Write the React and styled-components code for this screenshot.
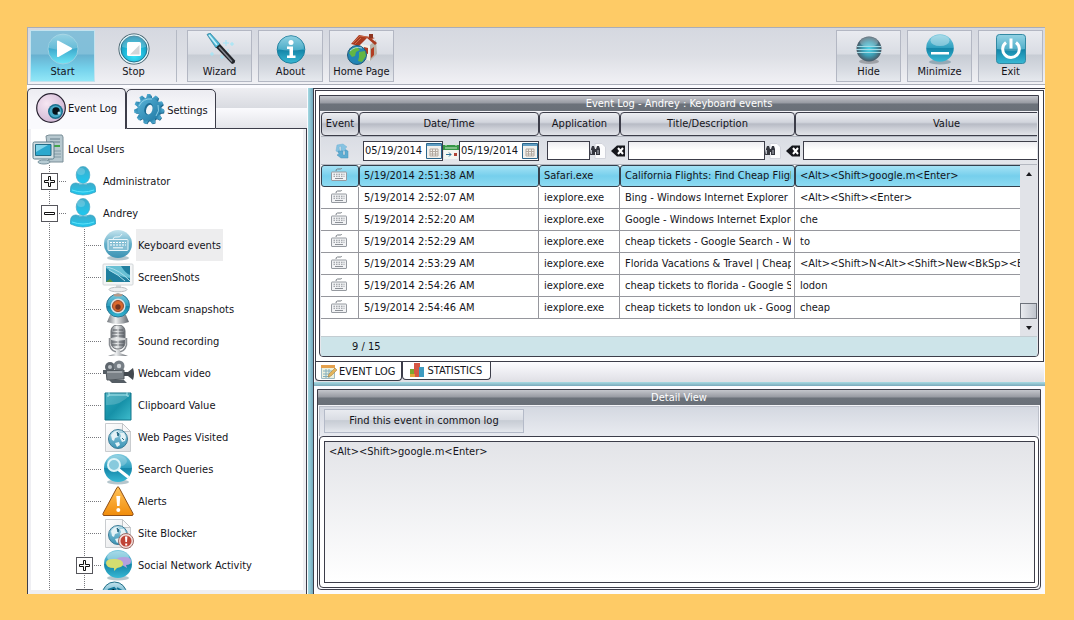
import { useState } from "react";
import styled, { createGlobalStyle, css } from "styled-components";

const ink = "#3c3d49";

const users = [
  { level: 0, icon: "computer", label: "Local Users" },
  { level: 1, icon: "user", label: "Administrator", toggle: "plus" },
  { level: 1, icon: "user", label: "Andrey", toggle: "minus" },
  { level: 2, icon: "keyboard", label: "Keyboard events" },
  { level: 2, icon: "screen", label: "ScreenShots" },
  { level: 2, icon: "webcam", label: "Webcam snapshots" },
  { level: 2, icon: "mic", label: "Sound recording" },
  { level: 2, icon: "camera", label: "Webcam video" },
  { level: 2, icon: "clipboard", label: "Clipboard Value" },
  { level: 2, icon: "webpage", label: "Web Pages Visited" },
  { level: 2, icon: "search", label: "Search Queries" },
  { level: 2, icon: "alert", label: "Alerts" },
  { level: 2, icon: "blocker", label: "Site Blocker" },
  { level: 2, icon: "chat", label: "Social Network Activity", toggle: "plus" },
  { level: 2, icon: "globe", label: "", toggle: "plus" },
];

const events = [
  ["5/19/2014 2:51:38 AM", "Safari.exe", "California Flights: Find Cheap Flight", "<Alt><Shift>google.m<Enter>"],
  ["5/19/2014 2:52:07 AM", "iexplore.exe", "Bing - Windows Internet Explorer", "<Alt><Shift><Enter>"],
  ["5/19/2014 2:52:20 AM", "iexplore.exe", "Google - Windows Internet Explore", "che"],
  ["5/19/2014 2:52:29 AM", "iexplore.exe", "cheap tickets - Google Search - Win", "to"],
  ["5/19/2014 2:53:29 AM", "iexplore.exe", "Florida Vacations & Travel | Cheap", "<Alt><Shift>N<Alt><Shift>New<BkSp><Bk"],
  ["5/19/2014 2:54:26 AM", "iexplore.exe", "cheap tickets to florida - Google Se", "lodon"],
  ["5/19/2014 2:54:46 AM", "iexplore.exe", "cheap tickets to london uk - Google", "cheap"],
];

export default function App() {
  const [selected, setSelected] = useState(0);

  return (
    <>
      <GlobalStyle />
      <Gradients />
      <Window>
        <Toolbar>
          <ToolButton $active><Icon name="play" /><span>Start</span></ToolButton>
          <ToolButton $flat><Icon name="stop" /><span>Stop</span></ToolButton>
          <Separator />
          <ToolButton><Icon name="wand" /><span>Wizard</span></ToolButton>
          <ToolButton><Icon name="info" /><span>About</span></ToolButton>
          <ToolButton><Icon name="home" /><span>Home Page</span></ToolButton>
          <Spacer />
          <ToolButton><Icon name="hide" /><span>Hide</span></ToolButton>
          <ToolButton><Icon name="minimize" /><span>Minimize</span></ToolButton>
          <ToolButton><Icon name="power" /><span>Exit</span></ToolButton>
        </Toolbar>
        <Main>
          <Sidebar>
            <SideTabs>
              <SideTab $current><Icon name="eye" /><span>Event Log</span></SideTab>
              <SideTab><Icon name="gear" /><span>Settings</span></SideTab>
              <TabFiller />
            </SideTabs>
            <TreeFrame>
              <Tree>
                {users.map((node, i) => (
                  <TreeNode key={i} node={node} />
                ))}
              </Tree>
            </TreeFrame>
          </Sidebar>
          <Splitter />
          <Content>
            <LogOuter>
              <LogFrame>
                <LogPanel>
                  <TitleBar>Event Log - Andrey : Keyboard events</TitleBar>
                  <HeaderTable aria-label="Event columns">
                    <Columns />
                    <thead>
                      <tr>
                        <th>Event</th>
                        <th>Date/Time</th>
                        <th>Application</th>
                        <th>Title/Description</th>
                        <th>Value</th>
                      </tr>
                    </thead>
                  </HeaderTable>
                  <Filters />
                  <LogBody>
                    <TableArea>
                      <EventTable aria-label="Events">
                        <Columns />
                        <tbody>
                          {events.map((event, i) => (
                            <EventRow key={event[0]} $selected={i === selected} onClick={() => setSelected(i)}>
                              <td><Icon name="keys" size={16} /></td>
                              {event.map((text, n) => (
                                <td key={n}><CellText>{text}</CellText></td>
                              ))}
                            </EventRow>
                          ))}
                        </tbody>
                      </EventTable>
                    </TableArea>
                    <ScrollTrack>
                      <ScrollButton aria-label="Scroll up"><Arrow $up /></ScrollButton>
                      <Spacer />
                      <ScrollThumb />
                      <ScrollButton aria-label="Scroll down"><Arrow /></ScrollButton>
                    </ScrollTrack>
                  </LogBody>
                  <LogFooter>9 / 15</LogFooter>
                </LogPanel>
              </LogFrame>
              <LogTabs>
                <LogTab $current><Icon name="log" size={16} />EVENT LOG</LogTab>
                <LogTab><Icon name="stats" size={16} />STATISTICS</LogTab>
              </LogTabs>
            </LogOuter>
            <Divider />
            <DetailPanel>
              <TitleBar>Detail View</TitleBar>
              <DetailTools>
                <FindButton>Find this event in common log</FindButton>
              </DetailTools>
              <DetailFrame>
                <DetailText readOnly aria-label="Detail View" value={events[selected][3]} />
              </DetailFrame>
            </DetailPanel>
          </Content>
        </Main>
      </Window>
    </>
  );
}

function TreeNode({ node }) {
  const { level, icon, label, toggle } = node;
  const button = toggle && (
    <Toggle aria-label={toggle === "plus" ? "Expand" : "Collapse"}>
      <svg width="15" height="15" viewBox="0 0 15 15" fill="#fff" stroke="#111">
        {toggle === "plus" ? (
          <path d="M6.5 2.5h2v4h4v2h-4v4h-2v-4h-4v-2h4z" />
        ) : (
          <path d="M2.5 6.5h10v2h-10z" />
        )}
      </svg>
    </Toggle>
  );

  return (
    <TreeRow>
      {level === 2 && <Guide />}
      {level > 0 && <Guide $branch>{button}</Guide>}
      <Icon name={icon} />
      {label && <NodeLabel $selected={icon === "keyboard"}>{label}</NodeLabel>}
    </TreeRow>
  );
}

function Columns() {
  return (
    <colgroup>
      <col width="38" />
      <col width="180" />
      <col width="81" />
      <col width="175" />
      <col />
    </colgroup>
  );
}

function Filters() {
  return (
    <FilterRow>
      <RefreshCell>
        <IconButton aria-label="Refresh"><Icon name="refresh" size={16} /></IconButton>
      </RefreshCell>
      <DateBox>
        <input aria-label="From date" defaultValue="05/19/2014" />
        <IconButton aria-label="Pick start date"><Icon name="calendar" size={16} /></IconButton>
      </DateBox>
      <IconButton aria-label="Date range"><Icon name="range" size={16} /></IconButton>
      <DateBox>
        <input aria-label="To date" defaultValue="05/19/2014" />
        <IconButton aria-label="Pick end date"><Icon name="calendar" size={16} /></IconButton>
      </DateBox>
      <FilterInput aria-label="Application" $width="43px" />
      <IconButton aria-label="Find application"><Icon name="find" size={16} /></IconButton>
      <ClearButton aria-label="Clear application"><Icon name="clear" size={16} /></ClearButton>
      <FilterInput aria-label="Title" $width="137px" $tight />
      <IconButton aria-label="Find title"><Icon name="find" size={16} /></IconButton>
      <ClearButton aria-label="Clear title"><Icon name="clear" size={16} /></ClearButton>
      <FilterInput aria-label="Value" $tight $last />
    </FilterRow>
  );
}

// Paint shared by all the icons below
function Gradients() {
  return (
    <Defs aria-hidden="true">
      <defs>
        <linearGradient id="sphere" x2="0" y2="1">
          <stop offset="0" stopColor="#7cc9de" />
          <stop offset=".5" stopColor="#2d9fbf" />
          <stop offset=".52" stopColor="#1485a8" />
          <stop offset="1" stopColor="#38b8d4" />
        </linearGradient>
        <linearGradient id="softSphere" x2="0" y2="1">
          <stop offset="0" stopColor="#c4e4ee" />
          <stop offset=".5" stopColor="#67b0ca" />
          <stop offset="1" stopColor="#3c93b4" />
        </linearGradient>
        <radialGradient id="bright" cx=".5" cy=".75" r=".7">
          <stop offset="0" stopColor="#3fe4fa" />
          <stop offset=".6" stopColor="#1cb4d6" />
          <stop offset="1" stopColor="#1588ad" />
        </radialGradient>
        <linearGradient id="playFill" x2="0" y2="1">
          <stop offset="0" stopColor="#7cc6dd" />
          <stop offset=".5" stopColor="#3fabce" />
          <stop offset="1" stopColor="#6ce6f7" />
        </linearGradient>
        <radialGradient id="hideFill">
          <stop offset="0" stopColor="#4fd6ea" />
          <stop offset=".55" stopColor="#3d9cb2" />
          <stop offset="1" stopColor="#4a5966" />
        </radialGradient>
        <linearGradient id="person" x2="0" y2="1">
          <stop offset="0" stopColor="#3fabc9" />
          <stop offset="1" stopColor="#1dc8f0" />
        </linearGradient>
        <linearGradient id="metal" x2="1" y2="0">
          <stop offset="0" stopColor="#70757b" />
          <stop offset=".4" stopColor="#eef0f1" />
          <stop offset="1" stopColor="#5f646b" />
        </linearGradient>
        <linearGradient id="warn" x2="0" y2="1">
          <stop offset="0" stopColor="#ffc35a" />
          <stop offset="1" stopColor="#f18c0a" />
        </linearGradient>
        <linearGradient id="board" x2="1" y2="1">
          <stop offset="0" stopColor="#2ca5b8" />
          <stop offset=".5" stopColor="#1691a8" />
          <stop offset="1" stopColor="#3fbccc" />
        </linearGradient>
        <radialGradient id="eyeball" cx=".35" cy=".35" r=".75">
          <stop offset="0" stopColor="#f6e6f2" />
          <stop offset="1" stopColor="#cdb4d2" />
        </radialGradient>
        <linearGradient id="gearFill" x2="1" y2="1">
          <stop offset="0" stopColor="#59b3d8" />
          <stop offset="1" stopColor="#2079a4" />
        </linearGradient>
        <linearGradient id="paper" x2="1" y2="1">
          <stop offset="0" stopColor="#fff" />
          <stop offset="1" stopColor="#dfe1e4" />
        </linearGradient>
      </defs>
    </Defs>
  );
}

const shadow = <ellipse cx="16" cy="29" rx="11" ry="2.4" fill="#2b5d70" opacity=".35" />;

const page = (
  <g>
    <path d="M3.500 2.500h17l8 8v20h-25z" fill="url(#paper)" stroke="#c9cccf" />
    <path d="M20.500 2.500v8h8z" fill="#f8f8f9" stroke="#c2c5c8" />
    <circle cx="16" cy="18" r="9.500" fill="url(#softSphere)" stroke="#3a7b96" />
    <path d="M9 14q3-4 6-4l2 2-2 2 1 2-3 1-1 3-2-1zM18 12l4 0 2 4-1 4-3 1-2-4 1-2zM13 22l4-1 1 3-3 2z" fill="#e4f2f6" />
    <path d="M15 11l2 2-1 2zM20 17l2 2" stroke="#286b86" fill="#286b86" />
  </g>
);

const teeth = Array.from({ length: 11 }, (_, i) => i * (360 / 11));

const icons = {
  play: (
    <>
      <circle cx="16" cy="16" r="15" fill="url(#playFill)" stroke="#9ad0e2" />
      <path d="M2 15a14 14 0 0 1 28 0q-14 4-28 0z" fill="#fff" opacity=".2" />
      <path d="M10 8.500q0-1.500 1.500-.8l13 7q1.500.8 0 1.700l-13 7.500q-1.500.7-1.500-1z" fill="#fff" />
    </>
  ),
  stop: (
    <>
      <circle cx="16" cy="16" r="15.500" fill="#31515e" />
      <circle cx="16" cy="16" r="14.700" fill="#e4f6fb" />
      <circle cx="16" cy="16" r="13" fill="url(#bright)" stroke="#22738e" />
      <path d="M4 14a12 12 0 0 1 24 0q-12 3-24 0z" fill="#fff" opacity=".22" />
      <rect x="9" y="9" width="14" height="14" rx="1.500" fill="#fff" />
      <path d="M12 21.500h9.500V12z" fill="#d3d6d9" />
    </>
  ),
  wand: (
    <>
      <path d="M3 1.500L6 0l10 11-4 4z" fill="#4db8d6" stroke="#2c7893" strokeWidth=".7" />
      <path d="M5 2l8 10" stroke="#c9f0fa" strokeWidth="1.600" />
      <path d="M12 14.500l4-3.500 15 16.500q.5 3-3 3.500z" fill="#22252a" />
      <path d="M15 14l13 14.500" stroke="#858a92" strokeWidth="1.500" />
      <path d="M22 7v6M19 10h6M28 9v4M26 11h4M8 19v4M6 21h4M18 22v4M16 24h4M24 16v3" stroke="#9ee6f8" strokeWidth="1" />
    </>
  ),
  info: (
    <>
      <circle cx="16" cy="16.500" r="13.800" fill="url(#sphere)" stroke="#1e7f9e" />
      <path d="M3 15.500a13 13 0 0 1 26 0q-13 5-26 0z" fill="#fff" opacity=".16" />
      <circle cx="16" cy="9.500" r="2.500" fill="#fff" />
      <path d="M12 13.500h6v9h2.500v2.500h-8.500v-2.500h2.500v-6.500h-2.500z" fill="#fff" />
    </>
  ),
  home: (
    <>
      <path d="M11 10l13 3v15l-13-5z" fill="#f3f0e8" />
      <path d="M24 12l6-5 1 14-7 7z" fill="#b9b4a8" />
      <path d="M25 16l3-2v8l-3 3zM18 14l4 1v6l-4-1z" fill="#b23d22" />
      <path d="M5 11L13 2l16 3-3 1 5 4-2 2-8-7-8 8z" fill="#a83b20" />
      <path d="M7 10L14 3l13 2M9 11l6-6" stroke="#cc6a49" fill="none" />
      <path d="M23 1h4v4h-4z" fill="#8c3420" />
      <circle cx="11" cy="22" r="9.500" fill="#2385b5" stroke="#205a79" />
      <path d="M3 20q3-6 8-6l3 3-4 2-1 4-3 1zM13 19l6-1 1 5-4 6-4-1 1-4z" fill="#63b644" />
      <path d="M4 18q5-5 12-3" stroke="#bde4ee" fill="none" opacity=".8" />
    </>
  ),
  hide: (
    <>
      <ellipse cx="16" cy="28.500" rx="10" ry="2.500" fill="#444" opacity=".35" />
      <circle cx="16" cy="16" r="12.500" fill="url(#hideFill)" />
      <ellipse cx="16" cy="9" rx="9" ry="5" fill="#fff" opacity=".24" />
      <path d="M4 13.500h24M3 16.500h26M4 19.500h24" stroke="#a5dbe5" strokeWidth="1" />
    </>
  ),
  minimize: (
    <>
      {shadow}
      <circle cx="16" cy="15" r="13.800" fill="url(#sphere)" />
      <ellipse cx="16" cy="7.500" rx="9.500" ry="5.500" fill="#fff" opacity=".35" />
      <path d="M7 19h18v2.500h-18z" fill="#fff" />
    </>
  ),
  power: (
    <>
      <rect x="1.500" y="1.500" width="29" height="29" rx="3" fill="url(#sphere)" stroke="#3289a3" />
      <path d="M2 5q0-3 3-3h22q3 0 3 3v11q-14 4-28 0z" fill="#fff" opacity=".18" />
      <path d="M11 9.500a8.300 8.300 0 1 0 10 0" fill="none" stroke="#fff" strokeWidth="3" />
      <path d="M16 5.500v10" stroke="#fff" strokeWidth="3" />
    </>
  ),
  eye: (
    <>
      <circle cx="16" cy="16" r="14.300" fill="url(#eyeball)" stroke="#282230" strokeWidth="1.200" />
      <circle cx="20.500" cy="19.500" r="7.500" fill="#1b6f8c" />
      <circle cx="20.500" cy="19.500" r="6" fill="#46a9c7" />
      <circle cx="21" cy="19" r="3.700" fill="#071219" />
      <circle cx="24" cy="21" r="1.500" fill="#b3e6f5" />
    </>
  ),
  gear: (
    <>
      <g transform="translate(1 1)" fill="#1c648a">
        {teeth.map((angle) => (
          <path key={angle} d="M13.500 5L14.500 1.500h3L18.500 5z" transform={`rotate(${angle} 16 16)`} />
        ))}
        <circle cx="16" cy="16" r="11.500" />
      </g>
      <g fill="url(#gearFill)">
        {teeth.map((angle) => (
          <path key={angle} d="M13 5.500L14.200 1h3.200L18.800 5.500z" transform={`rotate(${angle} 16 16)`} />
        ))}
        <circle cx="16" cy="16" r="11.500" />
      </g>
      <path d="M6 13q4-8 13-7M25 12q2 6-2 11" stroke="#a0dbef" fill="none" opacity=".8" />
      <ellipse cx="15.500" cy="16" rx="4" ry="6" fill="#1b6b93" transform="rotate(20 16 16)" />
      <ellipse cx="16.500" cy="16.500" rx="3" ry="5" fill="#f3f5f8" transform="rotate(20 16 16)" />
    </>
  ),
  computer: (
    <>
      <path d="M14 3l3-1h13l1 2v25h-14z" fill="#b7c8cf" stroke="#7b8f98" />
      <path d="M18 6h10M18 9h10" stroke="#657d88" />
      <path d="M22 13h6" stroke="#43a648" strokeWidth="2" />
      <path d="M22 18h7M22 21h7M22 24h7" stroke="#839aa4" />
      <rect x="1" y="9" width="21" height="17" rx="1.500" fill="#d2dee2" stroke="#5e7f8c" />
      <path d="M3.500 11.500h15.500v11h-15.500z" fill="#2ba8ce" stroke="#236c86" />
      <path d="M4 12h12l-12 7z" fill="#80d4ea" />
      <ellipse cx="12" cy="29" rx="6" ry="2" fill="#b7ccd4" stroke="#77919c" />
    </>
  ),
  user: (
    <>
      <path d="M3.500 24q0-6 5.500-6 7 3 14 0 5.500 0 5.500 6v3q-12.500 6-25 0z" fill="url(#person)" stroke="#2a9cbe" strokeWidth=".7" />
      <ellipse cx="16" cy="10" rx="6.800" ry="8.500" fill="url(#person)" stroke="#48a6c1" strokeWidth=".7" />
      <ellipse cx="14" cy="6.500" rx="4" ry="3.500" fill="#fff" opacity=".2" />
      <path d="M5 25q11 4 22 0" stroke="#5ee3fa" fill="none" />
    </>
  ),
  keyboard: (
    <>
      {shadow}
      <circle cx="16" cy="15" r="14" fill="url(#softSphere)" />
      <path d="M11 10q1-3 4-2t5-3" stroke="#e9f6fa" fill="none" />
      <rect x="6" y="10.500" width="20" height="11" rx="1" fill="#86bfd4" stroke="#e9f6fa" />
      <path d="M8 13.500h16M8 16h16" stroke="#fff" strokeDasharray="2 1" />
      <path d="M11 18.800h10" stroke="#fff" />
    </>
  ),
  screen: (
    <>
      <rect x="1" y="3" width="30" height="21" rx="1" fill="#f3f5f6" stroke="#d2d6d8" />
      <path d="M4 5h24v16h-24z" fill="#207f9f" />
      <path d="M4 5h15q5 8 9 9v3Q15 16 4 7z" fill="#69c0d4" />
      <path d="M5 6q13 3 23 14M7 9q10 5 16 11" stroke="#acdeeb" fill="none" />
      <path d="M4 21l4-3 3 3z" fill="#5d913a" />
      <path d="M14 24h5v4h-5z" fill="#d5d8db" />
      <ellipse cx="16" cy="28.500" rx="9" ry="2.300" fill="#eceeef" stroke="#bcc0c3" />
    </>
  ),
  webcam: (
    <>
      <path d="M8 22h16l3 7q-11 4-22 0z" fill="url(#metal)" />
      <circle cx="16" cy="12.500" r="11.500" fill="url(#sphere)" stroke="#2d7895" />
      <ellipse cx="16" cy="2" rx="4.500" ry="1.500" fill="#b69b8b" />
      <circle cx="16" cy="13" r="7.500" fill="#dce0e2" />
      <circle cx="16" cy="13" r="5.500" fill="#d9682f" stroke="#95492b" />
      <circle cx="16" cy="14" r="2.700" fill="#733321" />
    </>
  ),
  mic: (
    <>
      <path d="M7.500 13v7q2 7 8.500 7t8.500-7v-7" fill="none" stroke="#8b8f94" strokeWidth="1.500" />
      <rect x="9" y="0" width="14" height="24" rx="6" fill="url(#metal)" stroke="#6c7075" />
      <path d="M11 5h10M10 8h12M10 11h12M10 17h12M10 20h12" stroke="#55595f" />
      <path d="M16 2v21" stroke="#e7e8e9" />
      <path d="M9 14h14" stroke="#e7e8e9" strokeWidth="1.500" />
      <path d="M14 25h4v3l8 3h-20l8-3z" fill="url(#metal)" />
    </>
  ),
  camera: (
    <>
      <circle cx="8" cy="10" r="5" fill="#5e666d" />
      <circle cx="17" cy="9" r="5.500" fill="#767e85" />
      <circle cx="8" cy="10" r="2" fill="#bac0c5" />
      <circle cx="17" cy="9" r="2.200" fill="#d0d5d9" />
      <path d="M4 14l18-1v9l-17 1z" fill="#7a8187" stroke="#4e555b" />
      <path d="M5 15h15" stroke="#c7ccd0" />
      <path d="M22 15h4l5-4q2 6 0 12l-5-4h-4z" fill="#43494f" />
      <path d="M7 23h15l3 3h-15zM1 13h4v4h-4z" fill="#555d64" />
    </>
  ),
  clipboard: (
    <>
      <path d="M3 4h26l0 27h-26z" fill="url(#board)" stroke="#12758a" />
      <path d="M4 16Q18 17 28 6v-2h-24z" fill="#fff" opacity=".18" />
      <path d="M7 3v4h-2M25 3v4h2M7 6h18" stroke="#a9e3ea" fill="none" />
    </>
  ),
  webpage: page,
  search: (
    <>
      {shadow}
      <circle cx="16" cy="15" r="14" fill="url(#sphere)" />
      <ellipse cx="15" cy="8" rx="10" ry="6" fill="#fff" opacity=".22" />
      <path d="M16.500 16.500l9 7" stroke="#fff" strokeWidth="3" strokeLinecap="round" />
      <circle cx="12" cy="12" r="6" fill="#88cadd" stroke="#dff4f8" strokeWidth="2" />
    </>
  ),
  alert: (
    <>
      <path d="M15 2.500q1-1.500 2 0l14 26q.5 2-1 2h-28q-1.500 0-1-2z" fill="url(#warn)" stroke="#8f4f18" />
      <path d="M14.300 11h4l-.8 10h-2.400z" fill="#fff" />
      <circle cx="16.300" cy="25" r="2" fill="#fff" />
    </>
  ),
  blocker: (
    <>
      {page}
      <circle cx="24" cy="24" r="7.500" fill="#f2dedb" stroke="#9f6c67" />
      <circle cx="24" cy="24" r="5.500" fill="#c04436" />
      <path d="M23 19.500h2.400l-.4 5.500h-1.600zM23.200 26.500h2v2h-2z" fill="#fff" />
    </>
  ),
  chat: (
    <>
      {shadow}
      <circle cx="16" cy="15" r="14" fill="url(#sphere)" />
      <ellipse cx="16" cy="8" rx="11" ry="6" fill="#fff" opacity=".35" />
      <path d="M14 11q1-3 8-3t7 4-5 4l1 3-5-3q-7-1-6-5z" fill="#b4a0df" />
      <path d="M4 14q0-4 8-4t9 4-6 5l-3 3v-3q-8 0-8-5z" fill="#d5dd70" />
    </>
  ),
  globe: (
    <>
      <circle cx="12.500" cy="13" r="12" fill="url(#softSphere)" stroke="#206f88" />
      <path d="M6 9l6-2 2 2M15 7l5 3" stroke="#177799" strokeWidth="2" />
    </>
  ),
  refresh: (
    <>
      <path d="M3 2l6-1 4 3-2 1 2 3-6 0 0-5-2 1 1 6-4-2z" fill="#86c3e2" stroke="#6fb0d2" strokeWidth=".5" />
      <path d="M14 15l-7 0-4-3 2-1-1-3h5l0 4 2 0 0-5 3 1z" fill="#5fadd2" stroke="#4894bb" strokeWidth=".5" />
    </>
  ),
  keys: (
    <>
      <path d="M10 6q0-4 3-4h6q2 0 2-2" fill="none" stroke="#777d83" strokeWidth="2" />
      <rect x="1" y="8" width="30" height="17" rx="1" fill="#f1f2f4" stroke="#969aa0" strokeWidth="2" />
      <path d="M5 12.500h22M5 16.500h22" stroke="#8d9197" strokeWidth="2" strokeDasharray="3 2" />
      <path d="M8 21h16" stroke="#8d9197" strokeWidth="2" />
    </>
  ),
  calendar: (
    <>
      <path d="M.5.5h15v15H.500z" fill="#f2f1ed" stroke="#2b668c" />
      <path d="M1 1h14v2h-14z" fill="#609dc2" />
      <path d="M4 6h8v7H4zM4 8.500h8M4 11h8M6.500 6v7M9.500 6v7" stroke="#b3a9a0" fill="none" />
    </>
  ),
  range: (
    <>
      <path d="M1 3h14v13H1z" fill="#f4f7f1" />
      <path d="M0 2h16v5H0z" fill="#379646" />
      <path d="M3 0v3M13 0v3M2 5h12" stroke="#cfeacb" />
      <path d="M3 11.500h5M6 9.500l2 2-2 2" stroke="#2e7397" fill="none" />
      <path d="M11 10h3v3h-3z" fill="#b04537" />
    </>
  ),
  find: (
    <>
      <path d="M5 .5h7l3.500 3.500v11.500H5z" fill="#fcfcfd" stroke="#d2d4dc" />
      <path d="M1 6l1-3h2l1 3h1l1-3h2l1 3v6H6V9H5v3H0z" fill="#34363e" />
      <path d="M1.500 7v4M8 7v4" stroke="#b7bac3" />
    </>
  ),
  clear: (
    <>
      <path d="M1 8l6-5.500h8v11H7z" fill="#15161b" />
      <path d="M8 5l5 6M13 5l-5 6" stroke="#fff" strokeWidth="2" />
    </>
  ),
  log: (
    <>
      <path d="M.5 1.500h13v13H.500z" fill="#edf1df" stroke="#9ebbc5" />
      <path d="M0 1h14v3H0z" fill="#e5a14d" />
      <path d="M2 7h9M2 10h8M2 12.500h6M5 5v9M8 5v9" stroke="#81aebd" />
      <path d="M8 10l6-6 2 2-6 6-3 1z" fill="#e2b45b" stroke="#a37937" strokeWidth=".5" />
    </>
  ),
  stats: (
    <>
      <path d="M1 6h5v8H1z" fill="#7ca72e" />
      <path d="M5 0h6v14H5z" fill="#d65743" />
      <path d="M10 4h5v10h-5z" fill="#3d9bc0" />
      <path d="M1 11h5v3H1z" fill="#e3a63a" />
    </>
  ),
};

const smallArt = ["refresh", "calendar", "range", "find", "clear", "log", "stats"];

function Icon({ name, size = 32 }) {
  const box = smallArt.includes(name) ? 16 : 32;
  return (
    <Glyph width={size} height={size} viewBox={`0 0 ${box} ${box}`} aria-hidden="true">
      {icons[name]}
    </Glyph>
  );
}

const GlobalStyle = createGlobalStyle`
  * {
    box-sizing: border-box;
  }

  body {
    margin: 0;
    background: #fecb66;
    color: #14141a;
    font: 11px/14px "DejaVu Sans Condensed", "DejaVu Sans", sans-serif;
  }

  button, input, textarea {
    font: inherit;
    color: inherit;
  }

  button {
    padding: 0;
    border: 0;
    background: none;
  }
`;

const Defs = styled.svg`
  position: absolute;
  width: 0;
  height: 0;
`;

const Glyph = styled.svg`
  display: block;
  flex: none;
`;

const Window = styled.div`
  display: flex;
  flex-direction: column;
  height: calc(100vh - 53px);
  margin: 27px 29px 26px 27px;
  background: #fbfbff;
  overflow: hidden;
`;

const Toolbar = styled.header`
  display: flex;
  gap: 6px;
  height: 58px;
  padding: 2px 2px 2px 2px;
  border: solid #a9adb8;
  border-width: 1px 0 1px 1px;
  background: linear-gradient(#d5d8e0, #dddfe5 50%, #f1f1f5);
  flex: none;
`;

const metalFill = css`
  background: linear-gradient(#e9ebf0, #d9dce3 46%, #c7ccd4 48%, #d5d9e0 75%, #e6e9ee);
`;

const ToolButton = styled.button`
  display: flex;
  flex-direction: column;
  align-items: center;
  justify-content: center;
  width: 65px;
  border: 1px solid #b3b7c3;
  ${metalFill}

  ${({ $active }) =>
    $active &&
    css`
      border-color: #c3e2ee;
      background: linear-gradient(#85bfd9, #81bfd9 46%, #68b1d0 48%, #74d1eb 75%, #92e7f7);
    `}

  ${({ $flat }) =>
    $flat &&
    css`
      border-color: transparent;
      background: none;
    `}
`;

const Separator = styled.div`
  width: 5px;
  border-right: 1px solid #b4b9c4;
  margin-right: 4px;
`;

const Spacer = styled.div`
  flex: 1;
`;

const Main = styled.main`
  display: flex;
  flex: 1;
  min-height: 0;
  margin-top: 3px;
`;

const Sidebar = styled.aside`
  display: flex;
  flex-direction: column;
  width: 280px;
`;

const SideTabs = styled.nav`
  display: flex;
  align-items: flex-end;
  height: 41px;
  background: linear-gradient(#eeeef2, #d9dbe1 48%, #fafafd 50%, #e2e3e8);
`;

const SideTab = styled.button`
  display: flex;
  align-items: center;
  height: 40px;
  padding: 0 7px 0 6px;
  border: 1px solid ${ink};
  border-radius: 5px 5px 0 0;
  background: linear-gradient(#ececf1, #fafafd 60%);

  span {
    padding: 3px 0 0 2px;
  }

  ${({ $current }) =>
    $current &&
    css`
      height: 41px;
      padding: 0 8px 3px 7px;
      border-bottom: 0;

      span {
        padding-left: 1px;
      }
    `}
`;

const TabFiller = styled.div`
  flex: 1;
  align-self: stretch;
  border-bottom: 1px solid ${ink};
`;

const TreeFrame = styled.div`
  flex: 1;
  min-height: 0;
  padding: 0 3px 4px;
  border: solid ${ink};
  border-width: 0 1px;
  background: #efeff3;
`;

const Tree = styled.ul`
  height: 100%;
  margin: 0;
  padding: 4px 0 0;
  background: #fff;
  list-style: none;
  overflow: hidden;
`;

const TreeRow = styled.li`
  display: flex;
  align-items: center;
  height: 32px;
  padding-left: 1px;
`;

const Guide = styled.span`
  display: flex;
  align-items: center;
  justify-content: center;
  align-self: stretch;
  width: 35px;
  background:
    repeating-linear-gradient(#77787d 0 1px, transparent 1px 2px) 17px 0 / 1px 100% no-repeat
    ${({ $branch }) =>
      $branch && ", repeating-linear-gradient(to right, #77787d 0 1px, transparent 1px 2px) 17px 16px / 18px 1px no-repeat"};
`;

const Toggle = styled.button`
  display: grid;
  place-items: center;
  width: 17px;
  height: 17px;
  border: 1px solid #56565c;
  background: #fff;
`;

const NodeLabel = styled.span`
  display: flex;
  align-items: center;
  align-self: stretch;
  margin-left: 2px;
  padding: 2px 2px 0;
  background: ${({ $selected }) => ($selected ? "#ededee" : "none")};
`;

const Splitter = styled.div`
  width: 5px;
  margin-left: 1px;
  background: linear-gradient(to right, #a4dae3, #72a8bd);
`;

const Content = styled.section`
  display: flex;
  flex-direction: column;
  flex: 1;
  min-width: 0;
  border-left: 1px solid ${ink};
  background: #fbfbff;
`;

const LogOuter = styled.div`
  padding: 1px 1px 0;
  border-top: 1px solid ${ink};
`;

const LogFrame = styled.div`
  padding: 4px 4px 4px 3px;
  border: 1px solid ${ink};
  background: #fff;
`;

const LogPanel = styled.div`
  padding: 0 1px;
  border: 1px solid ${ink};
  border-radius: 0 0 4px 4px;
  background: #e3e5ea;
  overflow: hidden;
`;

const TitleBar = styled.h2`
  height: 16px;
  margin: 0 -1px;
  border-bottom: 1px solid #f4f4f8;
  background: linear-gradient(#c4c6cc, #9699a1 48%, #6c727b 52%, #6a7078);
  color: #fff;
  font-size: 11px;
  font-weight: 400;
  line-height: 15px;
  text-align: center;
  flex: none;
`;

const tableBase = css`
  width: 100%;
  table-layout: fixed;
  border-collapse: separate;
  border-spacing: 0;
`;

const HeaderTable = styled.table`
  ${tableBase}

  th {
    height: 24px;
    padding: 0;
    border: 1px solid ${ink};
    border-radius: 4px;
    background: linear-gradient(#eceef2, #d2d5dd 42%, #b7bbc5 50%, #cbced6 70%, #e2e4e9);
    font-weight: 400;
    white-space: nowrap;
  }

  th:last-child {
    border-right: 0;
    border-radius: 4px 0 0 4px;
    padding-left: 60px;
  }
`;

const FilterRow = styled.form`
  display: flex;
  align-items: center;
  height: 29px;
  border: solid #b4b8c1;
  border-width: 1px 0;
  background: linear-gradient(#dadde4, #e4e6eb);
`;

const RefreshCell = styled.div`
  display: flex;
  justify-content: center;
  width: 42px;
`;

const DateBox = styled.div`
  display: flex;
  align-items: center;
  width: 80px;
  height: 20px;
  border: 1px solid ${ink};
  background: #fff;

  input {
    flex: 1;
    width: 0;
    height: 16px;
    padding: 0 1px;
    border: 0;
    outline: 0;
  }
`;

const IconButton = styled.button`
  flex: none;
`;

const ClearButton = styled(IconButton)`
  margin-left: 4px;
`;

const FilterInput = styled.input`
  width: ${({ $width }) => $width};
  height: 19px;
  margin: 0 0 0 ${({ $tight }) => ($tight ? "2px" : "8px")};
  padding: 0 3px;
  border: 1px solid ${ink};
  background: linear-gradient(#ededf1, #fff 50%);

  ${({ $last }) =>
    $last &&
    css`
      flex: 1;
      min-width: 0;
      border-right: 0;
    `}
`;

const LogBody = styled.div`
  display: flex;
  height: 171px;
  background: #fff;
`;

const TableArea = styled.div`
  flex: 1;
  min-width: 0;
`;

const EventTable = styled.table`
  ${tableBase}
`;

const CellText = styled.div`
  overflow: hidden;
  white-space: nowrap;
`;

const EventRow = styled.tr`
  td {
    height: 22px;
    padding: 0 3px 0 5px;
    border: solid #96979d;
    border-width: 0 1px 1px 0;
  }

  td:first-child {
    padding-left: 10px;
  }

  td:last-child {
    padding-right: 0;
    border-right: 0;
  }

  ${({ $selected }) =>
    $selected &&
    css`
      td {
        padding-left: 4px;
        border: 1px solid #34404d;
        border-radius: 3px;
        background: linear-gradient(#a5e2f5, #76cfec 50%, #8ddbf2);
      }

      td:first-child {
        padding-left: 9px;
      }

      td:last-child {
        border-radius: 3px 0 0 3px;
      }
    `}
`;

const ScrollTrack = styled.div`
  display: flex;
  flex-direction: column;
  width: 17px;
  background: #e1e3e8;
`;

const ScrollButton = styled.button`
  display: grid;
  place-items: center;
  height: 17px;
`;

const Arrow = styled.span`
  border: solid transparent;
  border-width: 0 3px;
  ${({ $up }) => ($up ? "border-bottom: 4px solid #1b1b20;" : "border-top: 4px solid #1b1b20;")}
`;

const ScrollThumb = styled.div`
  height: 16px;
  border: 1px solid #6e737c;
  background: linear-gradient(to right, #e9ebef, #bfc4cd);
`;

const LogFooter = styled.footer`
  height: 20px;
  padding-left: 31px;
  border-top: 1px solid #c3cdd2;
  background: #cde4e9;
  line-height: 20px;
`;

const LogTabs = styled.nav`
  display: flex;
  align-items: flex-start;
  height: 20px;
  background: linear-gradient(#fcfcff, #dfdfe5);
`;

const LogTab = styled.button`
  display: flex;
  align-items: center;
  gap: 2px;
  height: 18px;
  padding: 0 8px 0 6px;
  border: solid ${ink};
  border-width: 0 1px 1px;
  border-radius: 0 0 4px 4px;
  background: #fff;

  ${({ $current }) =>
    $current &&
    css`
      height: 19px;
      padding: 1px 6px 0 5px;
    `}
`;

const Divider = styled.div`
  height: 4px;
  margin-bottom: 3px;
  background: linear-gradient(#a8dbe3, #79a9bb);
  flex: none;
`;

const DetailPanel = styled.div`
  display: flex;
  flex-direction: column;
  flex: 1;
  min-height: 0;
  margin: 0 4px 4px 3px;
  padding: 0 1px 1px;
  border: 1px solid ${ink};
  border-radius: 0 0 4px 4px;
`;

const DetailTools = styled.div`
  height: 30px;
  padding: 2px 4px 4px;
  border: 1px solid #bcc0ca;
  border-bottom: 0;
  background: linear-gradient(#d4d8e1, #e9ebf0);
  flex: none;
`;

const FindButton = styled.button`
  width: 200px;
  height: 24px;
  border: 1px solid #b4bac8;
  ${metalFill}
`;

const DetailFrame = styled.div`
  flex: 1;
  display: flex;
  min-height: 0;
  padding: 4px 3px 4px 4px;
  border: 1px solid ${ink};
  border-radius: 4px;
  background: #fff;
`;

const DetailText = styled.textarea`
  flex: 1;
  padding: 3px 4px;
  border: 1px solid ${ink};
  outline: 0;
  background: linear-gradient(#e3e4e8, #fff);
  resize: none;
`;
